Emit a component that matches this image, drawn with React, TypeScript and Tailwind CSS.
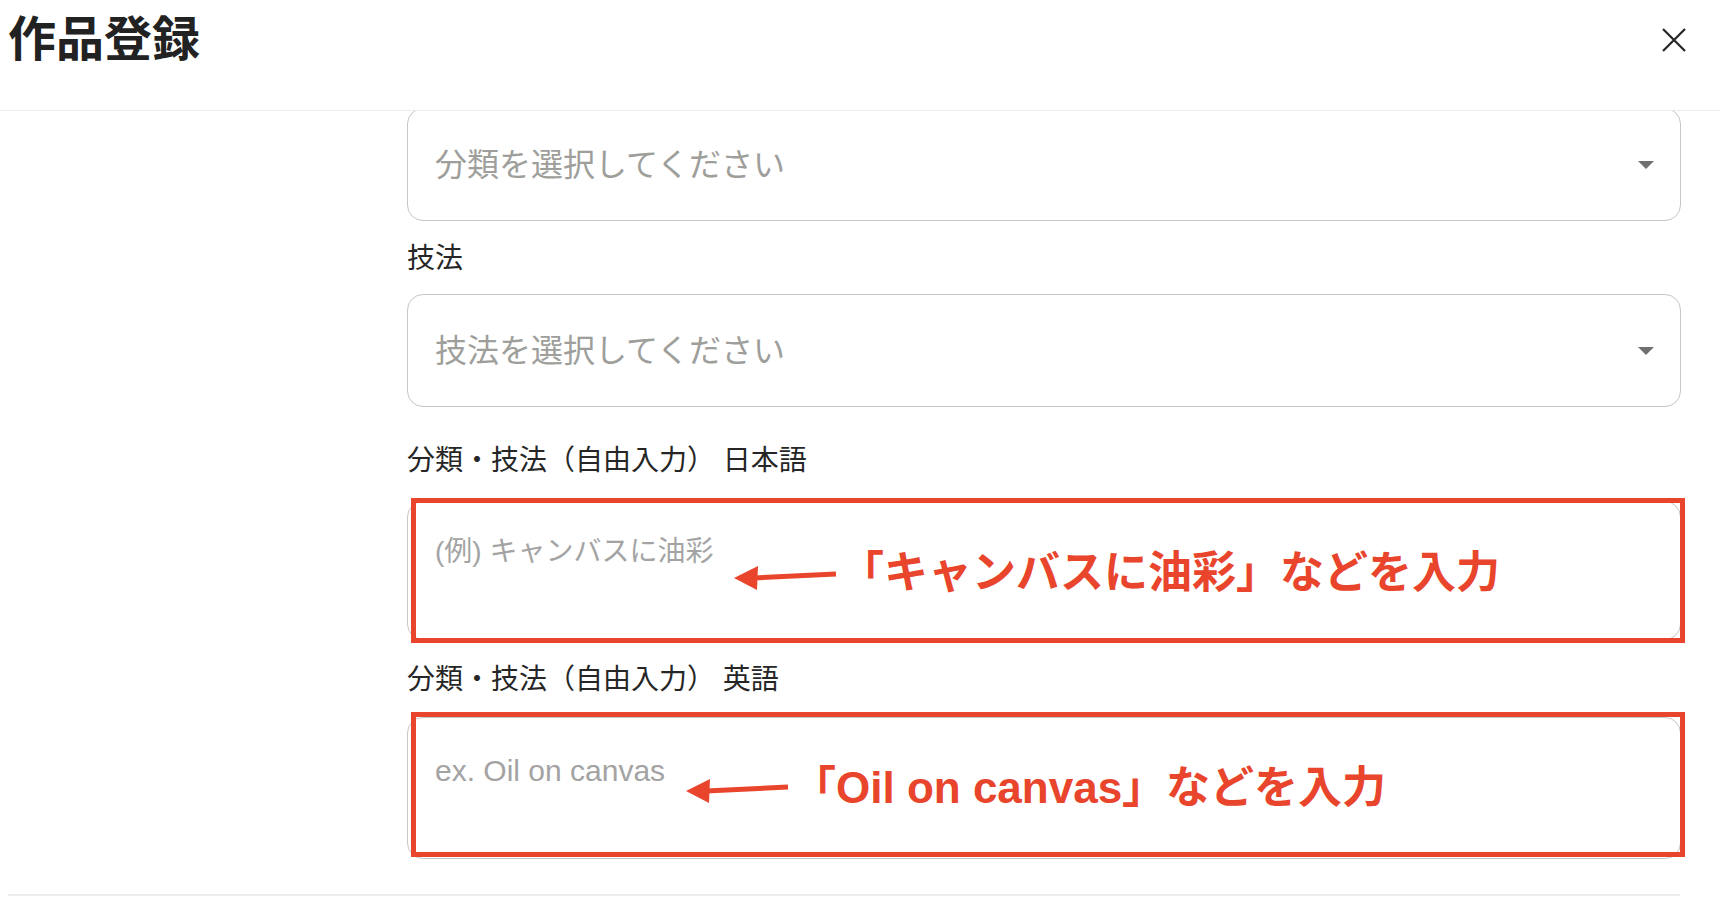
import React from "react";

const RED = "#e8452c";

const Chevron = () => (
  <svg width="16" height="8" viewBox="0 0 16 8" className="shrink-0">
    <polygon points="0,0 16,0 8,8" fill="#707070" />
  </svg>
);

const Arrow = ({ className }: { className: string }) => (
  <svg width="104" height="28" viewBox="0 0 104 28" className={className}>
    <polygon points="0,15 24,3 23,27" fill={RED} />
    <line x1="20" y1="15" x2="102" y2="11" stroke={RED} strokeWidth="5" />
  </svg>
);

const Select = ({ placeholder, className = "" }: { placeholder: string; className?: string }) => (
  <div
    className={`flex h-[113px] items-center justify-between rounded-[16px] border-[1.5px] border-[#c6c6c4] pl-[27px] pr-[26px] ${className}`}
  >
    <span className="text-[32px] leading-[40px] text-[#9e9e9b]">{placeholder}</span>
    <Chevron />
  </div>
);

const Label = ({ children, className = "" }: { children: React.ReactNode; className?: string }) => (
  <div className={`text-[28px] leading-[40px] text-[#262626] ${className}`}>{children}</div>
);

const App = () => {
  return (
    <div className="flex h-[898px] w-[1720px] flex-col overflow-hidden bg-white font-['Liberation_Sans','Noto_Sans_CJK_JP',sans-serif]">
      <header className="relative z-10 flex h-[111px] shrink-0 items-start justify-between border-b border-[#ebebe8] bg-white">
        <h1 className="pl-[8px] text-[48px] font-bold leading-[80px] text-[#222]">作品登録</h1>
        <button className="mr-[34px] mt-[28px]" aria-label="閉じる">
          <svg width="24" height="24" viewBox="0 0 24 24">
            <path d="M1 1L23 23M23 1L1 23" stroke="#262626" strokeWidth="2.2" />
          </svg>
        </button>
      </header>

      <div className="flex flex-1 flex-col overflow-hidden">
        <div className="ml-[407px] w-[1274px]">
          <Select placeholder="分類を選択してください" className="-mt-[3px]" />

          <Label className="mt-[18px] mb-[15px]">技法</Label>
          <Select placeholder="技法を選択してください" />

          <Label className="mt-[34px] mb-[20px]">分類・技法（自由入力） 日本語</Label>
          <div className="relative h-[139px] rounded-[16px] border-[1.5px] border-[#c6c6c4] pl-[27px] pt-[30px]">
            <div className="text-[28px] leading-[40px] text-[#a3a3a3]">(例) キャンバスに油彩</div>
            <div className="absolute -top-[4px] left-[3px] -right-[5px] -bottom-[4px] border-[5px] border-[#e8452c]" />
            <Arrow className="absolute left-[326px] top-[61px]" />
            <div className="absolute left-[432px] top-[46px] whitespace-nowrap text-[44px] font-bold leading-[50px] text-[#e8452c]">
              「キャンバスに油彩」などを入力
            </div>
          </div>

          <Label className="mt-[20px] mb-[17px]">分類・技法（自由入力） 英語</Label>
          <div className="relative h-[142px] rounded-[16px] border-[1.5px] border-[#c6c6c4] pl-[27px] pt-[33px]">
            <div className="text-[30px] leading-[40px] text-[#a3a3a3]">ex. Oil on canvas</div>
            <div className="absolute -top-[6px] left-[3px] -right-[5px] bottom-[1px] border-[5px] border-[#e8452c]" />
            <Arrow className="absolute left-[278px] top-[58px]" />
            <div className="absolute left-[384px] top-[45px] whitespace-nowrap text-[44px] font-bold leading-[50px] text-[#e8452c]">
              「Oil on canvas」などを入力
            </div>
          </div>
        </div>
        <div className="mx-[8px] mt-auto mb-[2px] w-[1672px] border-t-2 border-[#ececea]" />
      </div>
    </div>
  );
};

export default App;
